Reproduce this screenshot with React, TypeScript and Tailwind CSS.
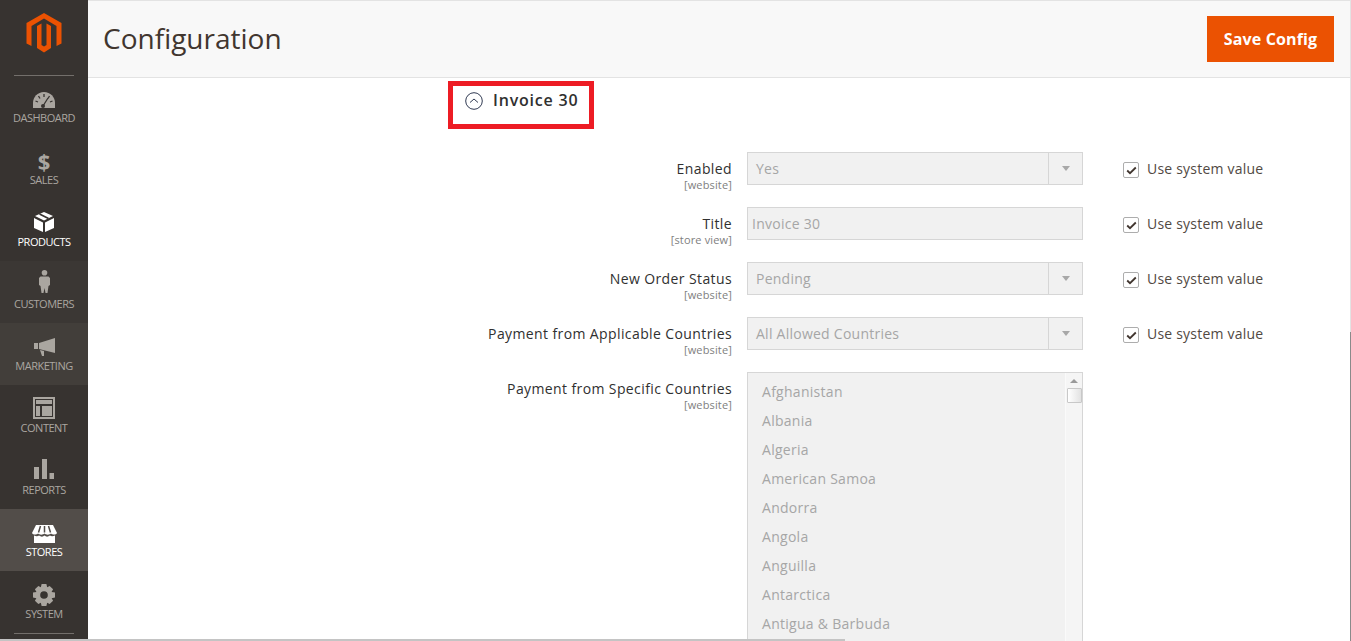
import React from "react";

const Logo = () => (
  <svg width="36" height="40" viewBox="0 0 36 40" className="block">
    <path fill="#eb5202" d="M18 0 L35.500 10 V30.500 L30.500 33 V13 L18 5.500 L5.500 13 V33 L0.500 30.500 V10 Z" />
    <path fill="#eb5202" d="M11 13 L15.500 10.500 V32 L18 33.500 L20.500 32 V10.500 L25 13 V35 L18 39.500 L11 35 Z" />
  </svg>
);

const Gauge = () => (
  <svg width="22" height="16" viewBox="0 0 22 16" className="block">
    <path fill="#aaa6a0" d="M11 0 C4.500 0 0 5 0 11 V16 H22 V11 C22 5 17.500 0 11 0 Z" />
    <path stroke="#373330" strokeWidth="1.300" fill="none" d="M11 2 V5 M5.500 4 L7 6.500 M16.500 4 L15 6.500 M2.500 9 L5 10 M19.500 9 L17 10 M15 6 L10 14" />
    <circle cx="10" cy="14" r="2" fill="#373330" />
  </svg>
);

const Dollar = () => (
  <span className="block h-[18px] text-[22px] leading-[18px] font-bold text-[#aaa6a0]">$</span>
);

const Box = () => (
  <svg width="20" height="20" viewBox="0 0 20 20" className="block">
    <path fill="#ffffff" d="M10 0 L19 4 L10 8.500 L1 4 Z" />
    <path fill="#ffffff" d="M0 6 L9 10.500 V20 L0 16 Z M20 6 V16 L11 20 V10.500 Z" />
    <path stroke="#373330" strokeWidth="1.600" d="M5.500 2 L14.500 6.500" />
  </svg>
);

const Person = () => (
  <svg width="11" height="23" viewBox="0 0 11 23" className="block">
    <circle cx="5.500" cy="2.800" r="2.800" fill="#aaa6a0" />
    <path fill="#aaa6a0" d="M1.500 6.500 H9.500 L11 8 V15 L9.500 16 L8.500 23 H6.500 L5.500 18 L4.500 23 H2.500 L1.500 16 L0 15 V8 Z" />
  </svg>
);

const Megaphone = () => (
  <svg width="21" height="18" viewBox="0 0 21 18" className="block">
    <path fill="#aaa6a0" d="M0 5 H4 V11 H0 Z M5 5 L21 0 V15 L5 11 Z M6 12 L10 13 L10 18 H8 Z" />
  </svg>
);

const Layout = () => (
  <svg width="22" height="22" viewBox="0 0 22 22" className="block">
    <path fill="#aaa6a0" fillRule="evenodd" d="M0 0 H22 V22 H0 Z M2 2 V20 H20 V2 Z" />
    <path fill="#aaa6a0" d="M3 3 H19 V7 H3 Z M3 9 H7 V19 H3 Z M9 9 H19 V19 H9 Z" />
  </svg>
);

const Bars = () => (
  <svg width="20" height="20" viewBox="0 0 20 20" className="block">
    <path fill="#aaa6a0" d="M0 8 H5 V20 H0 Z M8 0 H13 V20 H8 Z M15.500 14 H20 V20 H15.500 Z" />
  </svg>
);

const Store = () => (
  <svg width="25" height="18" viewBox="0 0 25 18" className="block">
    <path fill="#ffffff" d="M4 0 H21 L25 8 C24 10 20.500 10 19 8.500 C17.500 10 14 10 12.500 8.500 C11 10 7.500 10 6 8.500 C4.500 10 1 10 0 8 Z" />
    <path stroke="#524d49" strokeWidth="1.500" d="M8.500 1 L6.500 7.500 M12.500 1 V7.500 M16.500 1 L18.500 7.500" />
    <path fill="#ffffff" d="M2 10.500 C4 11.500 6 11.500 7 10.500 C9 12 11 12 12.500 10.500 C14 12 16 12 18 10.500 C19 11.500 21 11.500 23 10.500 V18 H2 Z" />
  </svg>
);

const Gear = () => (
  <svg width="22" height="22" viewBox="0 0 23 23" className="block">
    <path fill="#aaa6a0" fillRule="evenodd" d="M9 0 H14 L14.800 3.400 L17.400 2 L21 5.600 L19.400 8.300 L23 9 V14 L19.500 14.800 L21 17.400 L17.400 21 L14.800 19.500 L14 23 H9 L8.200 19.500 L5.600 21 L2 17.400 L3.500 14.800 L0 14 V9 L3.600 8.300 L2 5.600 L5.600 2 L8.200 3.400 Z M11.500 7.500 A4 4 0 1 0 11.500 15.500 A4 4 0 1 0 11.500 7.500 Z" />
  </svg>
);

const nav = [
  { label: "DASHBOARD", icon: <Gauge />, bg: "", pad: "pb-[4px]" },
  { label: "SALES", icon: <Dollar />, bg: "", pad: "pb-[4px]" },
  { label: "PRODUCTS", icon: <Box />, bg: "", active: true, pad: "pb-[4px]" },
  { label: "CUSTOMERS", icon: <Person />, bg: "bg-[#3b3734]", pad: "pb-[5px]" },
  { label: "MARKETING", icon: <Megaphone />, bg: "bg-[#423e3a]", pad: "pb-[4px]" },
  { label: "CONTENT", icon: <Layout />, bg: "", pad: "pb-[3px]" },
  { label: "REPORTS", icon: <Bars />, bg: "", pad: "pb-[5px]" },
  { label: "STORES", icon: <Store />, bg: "bg-[#524d49]", active: true, pad: "pb-[3px]" },
  { label: "SYSTEM", icon: <Gear />, bg: "", pad: "pb-[2px]" },
];

const Sidebar = () => (
  <aside className="w-[88px] shrink-0 h-[639px] bg-[#373330] flex flex-col items-center overflow-hidden">
    <div className="h-[75px] pt-[13px] shrink-0">
      <Logo />
    </div>
    <div className="w-[60px] h-px bg-[#736f6b] shrink-0" />
    {nav.map((n, i) => (
      <div
        key={n.label}
        className={`w-full h-[62px] shrink-0 flex flex-col items-center ${n.bg} ${i === 0 ? "-mt-px" : ""}`}
      >
        <div className={`h-[37px] flex items-end justify-center shrink-0 ${n.pad}`}>{n.icon}</div>
        <span
          className={`text-[11px] leading-[12px] tracking-[-0.5px] ${n.active ? "text-white" : "text-[#aaa6a0]"}`}
        >
          {n.label}
        </span>
      </div>
    ))}
    <div className="w-[60px] h-px bg-[#736f6b] shrink-0" />
  </aside>
);

const Arrow = () => (
  <div className="w-[34px] h-full border-l border-[#d6d6d6] flex items-center justify-center shrink-0">
    <div className="w-0 h-0 border-l-[4px] border-r-[4px] border-t-[5px] border-l-transparent border-r-transparent border-t-[#a8a8a8]" />
  </div>
);

const Check = () => (
  <label className="flex items-center h-[33px] gap-[8px] ml-[40px]">
    <span className="w-[16px] h-[16px] mt-[3px] border border-[#adadad] rounded-[2px] bg-white flex items-center justify-center">
      <svg width="11" height="9" viewBox="0 0 11 9">
        <path d="M1.200 4.500 L4 7.200 L9.800 1.500" fill="none" stroke="#41362f" strokeWidth="1.800" />
      </svg>
    </span>
    <span className="text-[14px] leading-[20px] tracking-[0.21px] text-[#514943]">Use system value</span>
  </label>
);

const Label = ({ title, scope }: { title: string; scope: string }) => (
  <div className="w-[644px] shrink-0 text-right pt-[8px] mr-[15px]">
    <div className="text-[14px] leading-[18px] tracking-[0.39px] text-[#303030]">{title}</div>
    <div className="text-[11px] leading-[14px] tracking-[0.15px] text-[#808080]">{scope}</div>
  </div>
);

const SelectRow = ({ title, scope, value }: { title: string; scope: string; value: string }) => (
  <div className="flex h-[55px]">
    <Label title={title} scope={scope} />
    <div className="w-[336px] h-[33px] border border-[#d6d6d6] bg-[#f1f1f1] flex items-center">
      <span className="flex-1 pl-[8px] text-[14px] tracking-[0.25px] text-[#a6a6a6]">{value}</span>
      <Arrow />
    </div>
    <Check />
  </div>
);

const countries = [
  "Afghanistan",
  "Albania",
  "Algeria",
  "American Samoa",
  "Andorra",
  "Angola",
  "Anguilla",
  "Antarctica",
  "Antigua & Barbuda",
];

const ListBox = () => (
  <div className="w-[336px] h-[290px] border border-[#d6d6d6] bg-[#f1f1f1] flex overflow-hidden">
    <div className="flex-1 pl-[14px] pt-[4px]">
      {countries.map((c) => (
        <div key={c} className="h-[29px] leading-[29px] text-[14px] tracking-[0.28px] text-[#a6a6a6]">
          {c}
        </div>
      ))}
    </div>
    <div className="w-[17px] bg-[#f5f5f5] border-l border-[#fafafa] flex flex-col items-center shrink-0">
      <div className="mt-[6px] w-0 h-0 border-l-[4px] border-r-[4px] border-b-[4px] border-l-transparent border-r-transparent border-b-[#9a9a9a]" />
      <div className="mt-[5px] w-[15px] h-[15px] border border-[#c8c8c8] rounded-[1px] bg-gradient-to-r from-white to-[#e2e2e2]" />
    </div>
  </div>
);

export default function App() {
  return (
    <div className="relative w-[1351px] h-[641px] overflow-hidden bg-white flex font-['Open_Sans',sans-serif]">
      <Sidebar />
      <main className="flex-1 min-w-0">
        <header className="h-[78px] bg-[#f8f8f8] border-t border-b border-[#e3e3e3] flex items-center justify-between pl-[15px] pr-[17px]">
          <h1 className="text-[28px] leading-[36px] -mt-[2px] text-[#41362f]">Configuration</h1>
          <button className="w-[127px] h-[46px] bg-[#eb5202] text-white font-bold text-[16px] tracking-[0.15px] mt-[-1px]">
            Save Config
          </button>
        </header>
        <div className="pl-[360px] pt-[3px]">
          <div className="w-[146px] h-[48px] border-[5px] border-[#ed1c24] flex items-start pl-[12px] pt-[3px] gap-[10px]">
            <svg width="18" height="18" viewBox="0 0 18 18" className="mt-[3px] shrink-0">
              <circle cx="9" cy="9" r="8.300" fill="none" stroke="#303a52" strokeWidth="1" />
              <path d="M5 10.500 L9 7 L13 10.500" fill="none" stroke="#303a52" strokeWidth="1" />
            </svg>
            <span className="text-[16px] leading-[22px] font-semibold tracking-[0.8px] text-[#303030] whitespace-nowrap">Invoice 30</span>
          </div>
        </div>
        <div className="pt-[23px]">
          <SelectRow title="Enabled" scope="[website]" value="Yes" />
          <div className="flex h-[55px]">
            <Label title="Title" scope="[store view]" />
            <div className="w-[336px] h-[33px] border border-[#d6d6d6] bg-[#f1f1f1] flex items-center pl-[4px] text-[14px] tracking-[0.25px] text-[#a6a6a6]">
              Invoice 30
            </div>
            <Check />
          </div>
          <SelectRow title="New Order Status" scope="[website]" value="Pending" />
          <SelectRow title="Payment from Applicable Countries" scope="[website]" value="All Allowed Countries" />
          <div className="flex">
            <Label title="Payment from Specific Countries" scope="[website]" />
            <ListBox />
          </div>
        </div>
      </main>
      <div className="absolute left-0 bottom-0 w-[845px] h-[2px] bg-[#c4c4c4]" />
      <div className="absolute right-0 top-0 w-[1px] h-[332px] bg-[#e3e3e3]" />
      <div className="absolute right-0 top-[332px] w-[1px] h-[309px] bg-[#8a8a8a]" />
    </div>
  );
}
